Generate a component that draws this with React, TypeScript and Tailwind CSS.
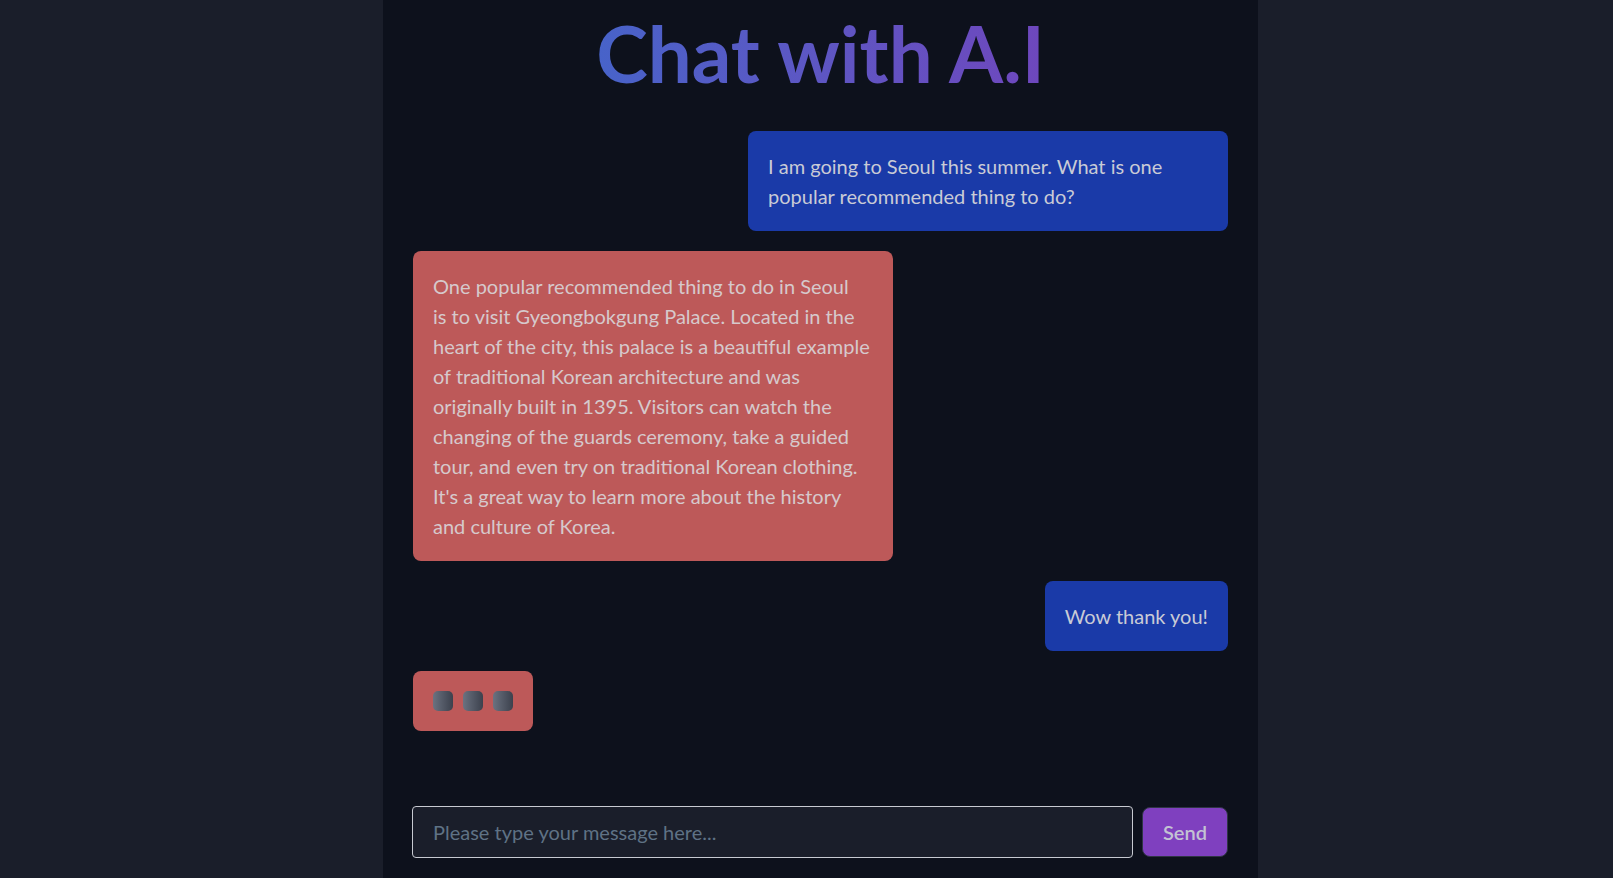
import React from "react";

const font = { fontFamily: "Lato, 'Open Sans', sans-serif" };

function UserBubble({ children }: { children: React.ReactNode }) {
  return (
    <div className="flex justify-end">
      <div className="max-w-[480px] rounded-[8px] bg-[#1a3aa8] p-5 text-[20px] leading-[30px] text-[#c9cbd6]">
        {children}
      </div>
    </div>
  );
}

function AiBubble({ children }: { children: React.ReactNode }) {
  return (
    <div className="flex justify-start">
      <div className="w-[480px] rounded-[8px] bg-[#bd5959] p-5 text-[20px] leading-[30px] text-[#d6c9cc]">
        {children}
      </div>
    </div>
  );
}

export default function App() {
  return (
    <div className="h-[878px] w-full overflow-hidden bg-[#1a1e2a]" style={font}>
      <div className="ml-[383px] flex h-full w-[875px] flex-col bg-[#0d111c] px-[30px]">
        <h1 className="pt-[8px] text-center text-[78px] font-bold leading-[90px]">
          <span className="bg-gradient-to-r from-[#4763c9] to-[#6e47bd] bg-clip-text text-transparent">
            Chat with A.I
          </span>
        </h1>
        <div className="mt-[33px] flex flex-1 flex-col gap-5">
          <UserBubble>I am going to Seoul this summer. What is one popular recommended thing to do?</UserBubble>
          <AiBubble>
            One popular recommended thing to do in Seoul
            <br />
            is to visit Gyeongbokgung Palace. Located in the heart of the city, this palace is a beautiful example of traditional Korean architecture and was originally built in 1395. Visitors can watch the changing of the guards ceremony, take a guided tour, and even try on traditional Korean clothing. It's a great way to learn more about the history and culture of Korea.
          </AiBubble>
          <UserBubble>Wow thank you!</UserBubble>
          <div className="flex justify-start">
            <div className="flex gap-[10px] rounded-[8px] bg-[#bd5959] p-5">
              <span className="h-5 w-5 rounded-[5px] bg-gradient-to-r from-[#6b7280] to-[#3c414d]" />
              <span className="h-5 w-5 rounded-[5px] bg-gradient-to-r from-[#6b7280] to-[#3c414d]" />
              <span className="h-5 w-5 rounded-[5px] bg-gradient-to-r from-[#6b7280] to-[#3c414d]" />
            </div>
          </div>
        </div>
        <div className="flex items-center gap-[9px] pb-5">
          <input
            autoFocus
            className="-ml-px h-[52px] flex-1 rounded-[4px] border border-[#c7cad1] bg-[#1a1e2a] pl-5 text-[20px] text-[#c9cbd6] caret-[#c9cbd6] outline-none placeholder:text-[#5f7285]"
            placeholder="Please type your message here..."
            style={font}
          />
          <button
            className="h-[50px] w-[86px] rounded-[8px] border border-[#2f3544] bg-[#7f40bf] text-[20px] font-semibold text-[#c3c3d3]"
            style={font}
          >
            Send
          </button>
        </div>
      </div>
    </div>
  );
}
